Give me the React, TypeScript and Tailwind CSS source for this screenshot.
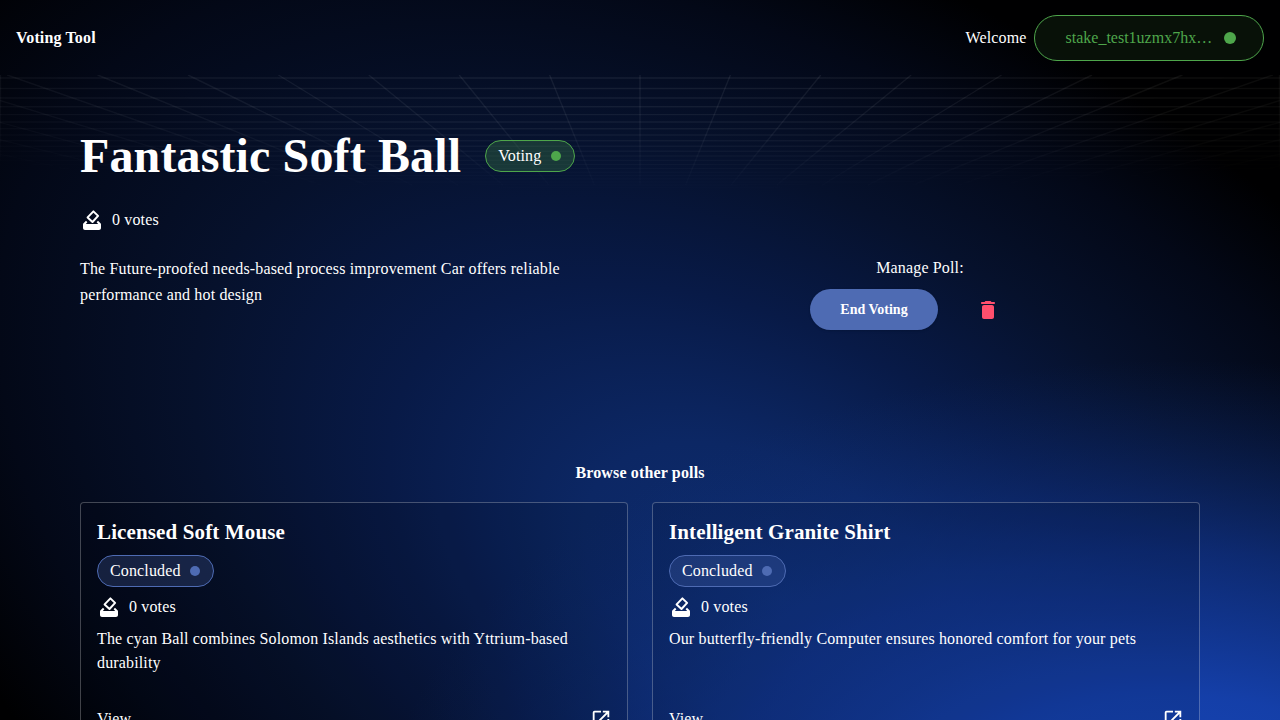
import React from 'react';

const VANISH_Y = 297;
const rows = Array.from({ length: 26 }, (_, n) => VANISH_Y - 4358 / (19.9 + n));
const rays = Array.from({ length: 41 }, (_, n) => n - 20);

function Backdrop() {
  return (
    <svg className="absolute inset-0 -z-10 h-[720px] w-full" viewBox="0 0 1280 720" preserveAspectRatio="none" aria-hidden="true">
      <defs>
        <radialGradient id="glow" gradientUnits="userSpaceOnUse" cx="0" cy="0" r="1" gradientTransform="translate(780 600) rotate(32) scale(1080 640)">
          <stop offset="0" stopColor="#0e2d70" />
          <stop offset=".2" stopColor="#0c2764" />
          <stop offset=".4" stopColor="#081a47" />
          <stop offset=".6" stopColor="#06112c" />
          <stop offset=".8" stopColor="#030817" />
          <stop offset=".96" stopColor="#000001" />
        </radialGradient>
        <radialGradient id="corner" gradientUnits="userSpaceOnUse" cx="0" cy="0" r="1" gradientTransform="translate(1180 840) scale(800 480)">
          <stop offset="0" stopColor="#1747ba" />
          <stop offset=".3" stopColor="#1541ae" stopOpacity=".95" />
          <stop offset=".6" stopColor="#12399a" stopOpacity=".6" />
          <stop offset="1" stopColor="#0e2c70" stopOpacity="0" />
        </radialGradient>
        <radialGradient id="fade" gradientUnits="userSpaceOnUse" cx="0" cy="0" r="1" gradientTransform="translate(640 60) scale(1100 136)">
          <stop offset="0" stopColor="#fff" />
          <stop offset=".5" stopColor="#fff" stopOpacity=".75" />
          <stop offset="1" stopColor="#fff" stopOpacity="0" />
        </radialGradient>
        <mask id="gridMask" maskUnits="userSpaceOnUse" x="0" y="75" width="1280" height="130">
          <rect x="0" y="75" width="1280" height="130" fill="url(#fade)" />
        </mask>
      </defs>
      <rect width="1280" height="720" fill="url(#glow)" />
      <rect width="1280" height="720" fill="url(#corner)" />
      <g mask="url(#gridMask)" stroke="#fff" strokeOpacity=".075" strokeWidth="1.4">
        {rows.map((y) => (
          <line key={y} x1="0" x2="1280" y1={y} y2={y} />
        ))}
        {rays.map((n) => (
          <line key={n} x1={640 + n * 90.4} y1="75" x2={640 + n * 45.6} y2="185" />
        ))}
        <line x1=".5" x2=".5" y1="75" y2="200" />
        <line x1="1279.5" x2="1279.5" y1="75" y2="200" />
      </g>
    </svg>
  );
}

function BallotIcon() {
  return (
    <svg className="size-6 shrink-0" viewBox="0 0 24 24" fill="currentColor" aria-hidden="true">
      <path d="m18 12.8 2.5 2.5c.32.32.5.72.5 1.17V20c0 1.1-.9 2-2 2H5c-1.1 0-2-.9-2-2v-3.53c0-.45.18-.85.5-1.17L6 12.8l1.4 1.4L5.8 16h12.4l-1.6-1.8z" />
      <path d="m13.4 3.4 4.7 4.5-5.6 6.1-4.9-4.6z" fill="none" stroke="currentColor" strokeWidth="2" strokeLinejoin="round" />
    </svg>
  );
}

function LaunchIcon() {
  return (
    <svg className="-mr-px size-[22px] shrink-0" viewBox="0 0 24 24" fill="currentColor" aria-hidden="true">
      <path d="M19 19H5V5h7V3H5a2 2 0 0 0-2 2v14a2 2 0 0 0 2 2h14c1.1 0 2-.9 2-2v-7h-2v7zM14 3v2h3.59l-9.83 9.83 1.41 1.41L19 6.41V10h2V3h-7z" />
    </svg>
  );
}

function Votes() {
  return (
    <div className="flex items-center gap-2">
      <BallotIcon />
      <span>0 votes</span>
    </div>
  );
}

function PollCard({ title, text }: { title: string; text: string }) {
  return (
    <article className="h-[246px] rounded border border-white/25 bg-black/10 px-4 pt-[13px]">
      <h3 className="text-[21px] leading-8 font-bold tracking-[0.13px]">{title}</h3>
      <div className="mt-[7px] flex h-8 w-fit items-center gap-[9px] rounded-full border border-[#4e6bb3] bg-[#506db5]/25 pr-[13px] pl-3">
        <span>Concluded</span>
        <span className="size-2.5 rounded-full bg-[#4e6bb3]" />
      </div>
      <div className="mt-2">
        <Votes />
      </div>
      <p className="mt-2 h-12">{text}</p>
      <div className="mt-8 flex h-6 items-center justify-between">
        <span>View</span>
        <LaunchIcon />
      </div>
    </article>
  );
}

export default function App() {
  return (
    <div className="relative isolate h-[720px] overflow-hidden bg-black font-['Liberation_Serif',serif] text-base leading-6 tracking-[0.15px] text-white">
      <Backdrop />
      <header className="flex h-[75px] items-center justify-between px-4">
        <span className="font-bold">Voting Tool</span>
        <div className="flex items-center gap-[7.5px]">
          <span>Welcome</span>
          <div className="flex h-[46px] w-[230px] items-center gap-3 rounded-full border border-[#4ea64b] bg-[#4ea64b]/10 pl-[30.5px] text-[#4ea64b]">
            <span className="tracking-normal">stake_test1uzmx7hx…</span>
            <span className="size-3 rounded-full bg-[#4ea64b]" />
          </div>
        </div>
      </header>
      <main className="px-20 pt-[53px]">
        <div className="flex h-14 items-center gap-6">
          <h1 className="text-5xl leading-14 font-bold tracking-[0.13px]">Fantastic Soft Ball</h1>
          <div className="flex h-8 w-[90px] items-center justify-between rounded-full border border-[#4ea64b] bg-[#4ea64b]/25 pr-[13px] pl-3">
            <span>Voting</span>
            <span className="size-2.5 rounded-full bg-[#4ea64b]" />
          </div>
        </div>
        <div className="mt-6">
          <Votes />
        </div>
        <div className="mt-6 grid grid-cols-2">
          <p className="w-[520px] leading-[26px]">
            The Future-proofed needs-based process improvement Car offers reliable performance and hot design
          </p>
          <div className="flex flex-col items-center">
            <span>Manage Poll:</span>
            <div className="mt-[9px] flex items-center gap-[38px] pr-[30px]">
              <button className="h-[41px] w-32 rounded-full bg-[#4e6bb3] text-sm font-bold tracking-normal shadow-sm">End Voting</button>
              <svg className="size-6 text-[#ff4f6d]" viewBox="0 0 24 24" fill="currentColor" aria-hidden="true">
                <path d="M6 19c0 1.1.9 2 2 2h8c1.1 0 2-.9 2-2V9c0-1.1-.9-2-2-2H8c-1.1 0-2 .9-2 2v10zM18 4h-2.5l-.71-.71c-.18-.18-.44-.29-.7-.29H9.91c-.26 0-.52.11-.7.29L8.5 4H6c-.55 0-1 .45-1 1s.45 1 1 1h12c.55 0 1-.45 1-1s-.45-1-1-1z" />
              </svg>
            </div>
          </div>
        </div>
        <h2 className="mt-[131px] text-center font-bold">Browse other polls</h2>
        <div className="mt-[17px] grid grid-cols-2 gap-6">
          <PollCard title="Licensed Soft Mouse" text="The cyan Ball combines Solomon Islands aesthetics with Yttrium-based durability" />
          <PollCard title="Intelligent Granite Shirt" text="Our butterfly-friendly Computer ensures honored comfort for your pets" />
        </div>
      </main>
    </div>
  );
}
